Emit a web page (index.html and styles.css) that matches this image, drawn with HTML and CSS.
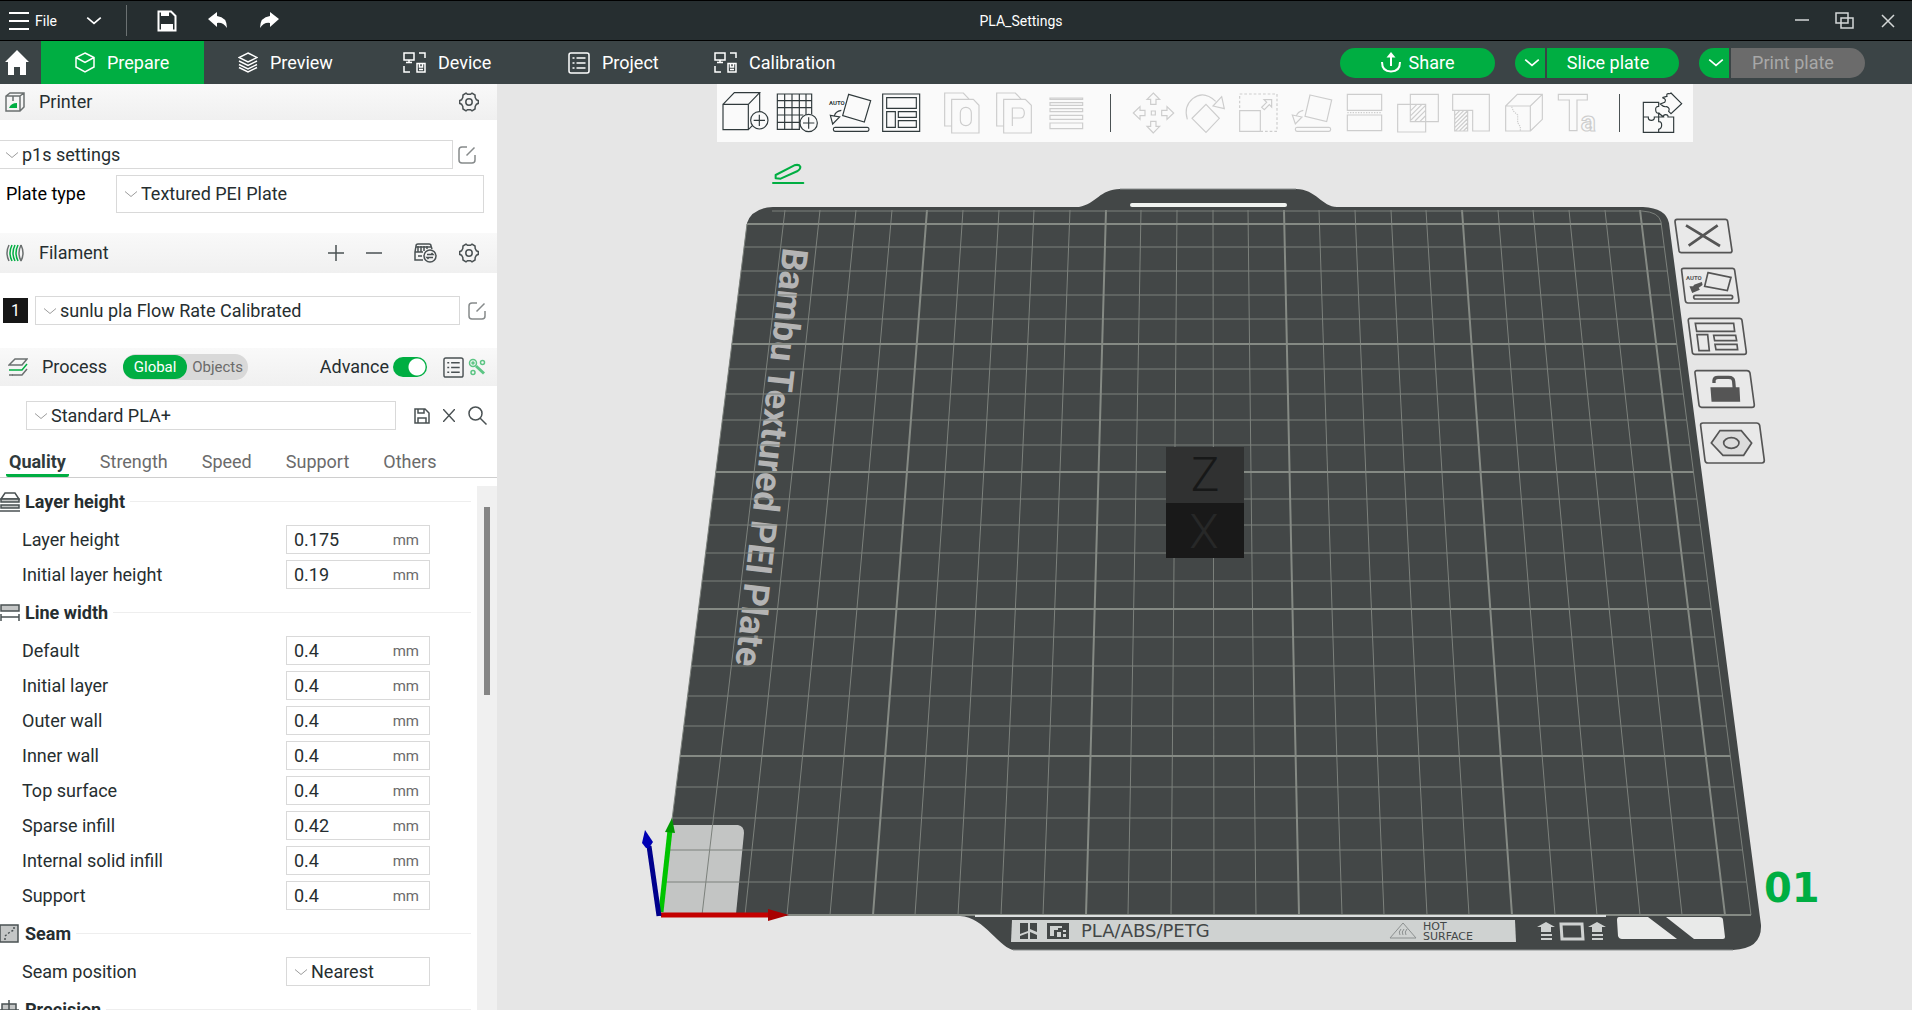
FILE: index.html
```html
<!DOCTYPE html>
<html lang="en">
<head>
    <meta charset="UTF-8">
    <meta name="viewport" content="width=device-width, initial-scale=1.0">
    <title>PLA_Settings</title>
    <link rel="stylesheet" href="styles.css">
</head>
<body>
    <!-- shared icons -->
    <svg class="defs" width="0" height="0" aria-hidden="true">
        <symbol id="chevron" viewBox="0 0 14 8"><path d="M1 1.5L7 6.5L13 1.5"/></symbol>
        <symbol id="gear" viewBox="0 0 20 20"><path d="M7 1.2L8.5 2.3H11.5L13 1.2L16 3L16.2 5.5L17.5 7.8L19.3 8.6V11.4L17.5 12.2L16.2 14.5L16 17L13 18.8L11.5 17.7H8.5L7 18.8L4 17L3.8 14.5L2.5 12.2L.7 11.4V8.6L2.5 7.8L3.8 5.5L4 3Z"/><circle cx="10" cy="10" r="3.2"/></symbol>
        <symbol id="edit" viewBox="0 0 18 18"><path d="M9 1H4Q1 1 1 4V14Q1 17 4 17H14Q17 17 17 14V9M8.5 9.5L16.5 1.5"/></symbol>
        <symbol id="list" viewBox="0 0 22 22"><rect x="1" y="1" width="20" height="20" rx="2"/><path d="M4.500 6H6.500M8.500 6H17.500M4.500 11H6.500M8.500 11H17.500M4.500 16H6.500M8.500 16H17.500"/></symbol>
        <symbol id="device" viewBox="0 0 23 21"><path d="M1 1H11V8H1ZM6 8V10.500M3 10.500H9M16 1H22V6M1 14V20H7M14 11.500H22V20H14ZM16.500 11.500V15H19.500V11.500M16 17.500H20"/></symbol>
    </svg>

    <header class="titlebar">
        <button class="file-btn">
            <svg width="20" height="18" viewBox="0 0 20 18"><path d="M0 1H20M0 9H20M0 17H20"/></svg>
            <span>File</span>
        </button>
        <button class="bar-btn chev-btn" aria-label="More"><svg width="16" height="9"><use href="#chevron"/></svg></button>
        <span class="bar-sep"></span>
        <button class="bar-btn save-btn" aria-label="Save">
            <svg width="20" height="22" viewBox="0 0 20 22"><path d="M1.500 1.500H14L18.500 6V20.500H1.500Z"/><path class="solid" d="M4 1H12V6H4ZM4 14H16V20H4Z"/></svg>
        </button>
        <button class="bar-btn" aria-label="Undo">
            <svg width="20" height="17" viewBox="0 0 20 17"><path class="solid" d="M0 7L9 0V4Q19 5 19 16Q15 10 9 11V15Z"/></svg>
        </button>
        <button class="bar-btn" aria-label="Redo">
            <svg width="20" height="17" viewBox="0 0 20 17"><path class="solid" d="M20 7L11 0V4Q1 5 1 16Q5 10 11 11V15Z"/></svg>
        </button>
        <h1 class="doc-title">PLA_Settings</h1>
        <div class="window-btns">
            <button class="bar-btn" aria-label="Minimize"><svg width="14" height="18" viewBox="0 0 14 18"><path d="M0 8H14"/></svg></button>
            <button class="bar-btn" aria-label="Restore"><svg width="20" height="17" viewBox="0 0 20 17"><path d="M1 1H13V11H1ZM6 6H18V16H6Z"/></svg></button>
            <button class="bar-btn" aria-label="Close"><svg width="14" height="14" viewBox="0 0 14 14"><path d="M1 1L13 13M13 1L1 13"/></svg></button>
        </div>
    </header>

    <nav class="navbar">
        <a class="home" href="#" aria-label="Home">
            <svg width="24" height="25" viewBox="0 0 24 25"><path d="M12 0L24 12H21V25H15V17H9V25H3V12H0Z"/></svg>
        </a>
        <a class="nav-tab active" href="#">
            <svg width="20" height="21" viewBox="0 0 20 21"><path d="M10 1L19 5.500V15L10 20L1 15V5.500ZM1 5.500L10 10.500L19 5.500"/></svg>
            Prepare
        </a>
        <a class="nav-tab" href="#">
            <svg width="20" height="21" viewBox="0 0 20 21"><path d="M10 1L19 5.500L10 10L1 5.500ZM1 9L10 13.500L19 9M1 12.500L10 17L19 12.500M1 15.500L10 20L19 15.500"/></svg>
            Preview
        </a>
        <a class="nav-tab" href="#"><svg width="23" height="21"><use href="#device"/></svg>Device</a>
        <a class="nav-tab compact" href="#"><svg width="22" height="22"><use href="#list"/></svg>Project</a>
        <a class="nav-tab" href="#"><svg width="23" height="21"><use href="#device"/></svg>Calibration</a>

        <div class="nav-actions">
            <button class="pill share">
                <svg width="20" height="21" viewBox="0 0 20 21"><path d="M1 10Q1 19.500 10 19.500Q19 19.500 19 10M10 14V3"/><path class="solid" d="M5.500 5.500L10 0L14.500 5.500Z"/></svg>
                Share
            </button>
            <div class="split">
                <button class="pill drop" aria-label="Slice options"><svg width="16" height="9"><use href="#chevron"/></svg></button>
                <button class="pill main">Slice plate</button>
            </div>
            <div class="split">
                <button class="pill drop" aria-label="Print options"><svg width="16" height="9"><use href="#chevron"/></svg></button>
                <button class="pill main off" disabled>Print plate</button>
            </div>
        </div>
    </nav>

    <div class="workspace">
        <aside class="sidebar">
            <!-- Printer -->
            <div class="panel-head">
                <svg class="ico" width="20" height="20" viewBox="0 0 20 20"><path d="M1 4L5 1H19V15L15 19H1ZM1 4H15V19M15 4L19 1M8 4V9"/><path class="leaf" d="M4 16Q6 11 12 11V16Z"/></svg>
                <h2>Printer</h2>
                <button class="icon-btn push" aria-label="Printer settings"><svg width="20" height="20"><use href="#gear"/></svg></button>
            </div>
            <div class="printer-body">
                <div class="preset-row">
                    <div class="select grow flush">
                        <svg width="14" height="8"><use href="#chevron"/></svg>
                        <select aria-label="Printer preset"><option>p1s settings</option></select>
                    </div>
                    <button class="icon-btn pale" aria-label="Edit printer"><svg width="18" height="18"><use href="#edit"/></svg></button>
                </div>
                <div class="plate-row">
                    <label for="plate">Plate type</label>
                    <div class="select grow tall">
                        <svg width="14" height="8"><use href="#chevron"/></svg>
                        <select id="plate"><option>Textured PEI Plate</option></select>
                    </div>
                </div>
            </div>

            <!-- Filament -->
            <div class="panel-head filament-head">
                <svg class="ico" width="20" height="20" viewBox="0 0 20 20"><path d="M4 2Q0 10 4 18M16 2Q20 10 16 18M16 2Q12 10 16 18"/><path class="green" d="M7 2Q3 10 7 18M10 2Q6 10 10 18M13 2Q9 10 13 18"/></svg>
                <h2>Filament</h2>
                <div class="head-tools push">
                    <button class="icon-btn" aria-label="Add filament"><svg width="16" height="16" viewBox="0 0 16 16"><path d="M8 0V16M0 8H16"/></svg></button>
                    <button class="icon-btn" aria-label="Remove filament"><svg width="16" height="16" viewBox="0 0 16 16"><path d="M0 8H16"/></svg></button>
                    <button class="icon-btn ams" aria-label="Sync AMS"><svg width="23" height="20" viewBox="0 0 23 20"><path d="M9 17H1V9L2 3Q2 1 4 1H15Q17 1 17 3L18 6M1 9H9M4 3V9M7 3V9M10 3V8M13 3V6M2 4H17M4 13H8"/><circle cx="16" cy="13" r="6"/><path d="M13 11.500H19L17.500 10M19 14.500H13L14.500 16"/></svg></button>
                    <button class="icon-btn" aria-label="Filament settings"><svg width="20" height="20"><use href="#gear"/></svg></button>
                </div>
            </div>
            <div class="filament-body">
                <span class="slot">1</span>
                <div class="select grow">
                    <svg width="14" height="8"><use href="#chevron"/></svg>
                    <select aria-label="Filament preset"><option>sunlu pla Flow Rate Calibrated</option></select>
                </div>
                <button class="icon-btn pale" aria-label="Edit filament"><svg width="18" height="18"><use href="#edit"/></svg></button>
            </div>

            <!-- Process -->
            <div class="panel-head process-head">
                <svg class="ico" width="20" height="20" viewBox="0 0 20 20"><path d="M7 2H19L14 8H1ZM4 18H14L19 12"/><path class="green" d="M1 13H14L19 7"/><path d="M1 18H5"/></svg>
                <h2>Process</h2>
                <div class="scope">
                    <button class="on">Global</button>
                    <button>Objects</button>
                </div>
                <label class="advance push" for="advance">Advance</label>
                <input type="checkbox" class="toggle" id="advance" checked>
                <button class="icon-btn params-btn" aria-label="Parameter list"><svg width="21" height="21"><use href="#list"/></svg></button>
                <button class="icon-btn compare" aria-label="Compare presets"><svg width="18" height="18" viewBox="0 0 18 18"><circle cx="5" cy="5" r="3.500"/><circle cx="5" cy="5" r="1"/><circle cx="14.500" cy="4.500" r="2"/><circle cx="5" cy="14.500" r="2"/><path d="M8 8L16 15.500" stroke-width="3"/></svg></button>
            </div>
            <div class="process-body">
                <div class="select grow">
                    <svg width="14" height="8"><use href="#chevron"/></svg>
                    <select aria-label="Process preset"><option>Standard PLA+</option></select>
                </div>
                <div class="process-tools">
                    <button class="icon-btn" aria-label="Save preset"><svg width="16" height="16" viewBox="0 0 16 16"><path d="M1 1H11L15 5V15H1ZM4 1V5H10V1M4 15V10H12V15"/></svg></button>
                    <button class="icon-btn" aria-label="Delete preset"><svg width="12" height="13" viewBox="0 0 12 13"><path d="M0 0L12 13M12 0L0 13"/></svg></button>
                    <button class="icon-btn" aria-label="Search"><svg width="19" height="19" viewBox="0 0 19 19"><circle cx="7.500" cy="7.500" r="6.500"/><path d="M12 12L18.500 18.500"/></svg></button>
                </div>
            </div>
            <div class="tabs">
                <button class="tab active">Quality</button>
                <button class="tab">Strength</button>
                <button class="tab">Speed</button>
                <button class="tab">Support</button>
                <button class="tab">Others</button>
            </div>

            <div class="params">
                <div class="param-list">
                    <h3>
                        <svg width="20" height="20" viewBox="0 0 20 20"><path d="M1 7L5 1H15L19 7Z"/><path class="fill" d="M1 7H19V10H1ZM1 13H19V16H1Z"/><path d="M0 19H20"/></svg>
                        Layer height
                    </h3>
                    <div class="param"><label for="p1">Layer height</label><div class="field"><input type="text" id="p1" value="0.175"><span>mm</span></div></div>
                    <div class="param"><label for="p2">Initial layer height</label><div class="field"><input type="text" id="p2" value="0.19"><span>mm</span></div></div>

                    <h3>
                        <svg width="20" height="20" viewBox="0 0 20 20"><path class="fill" d="M1 2H19V8H1Z"/><path d="M1 11V18M19 11V18M1 14H19"/></svg>
                        Line width
                    </h3>
                    <div class="param"><label for="p3">Default</label><div class="field"><input type="text" id="p3" value="0.4"><span>mm</span></div></div>
                    <div class="param"><label for="p4">Initial layer</label><div class="field"><input type="text" id="p4" value="0.4"><span>mm</span></div></div>
                    <div class="param"><label for="p5">Outer wall</label><div class="field"><input type="text" id="p5" value="0.4"><span>mm</span></div></div>
                    <div class="param"><label for="p6">Inner wall</label><div class="field"><input type="text" id="p6" value="0.4"><span>mm</span></div></div>
                    <div class="param"><label for="p7">Top surface</label><div class="field"><input type="text" id="p7" value="0.4"><span>mm</span></div></div>
                    <div class="param"><label for="p8">Sparse infill</label><div class="field"><input type="text" id="p8" value="0.42"><span>mm</span></div></div>
                    <div class="param"><label for="p9">Internal solid infill</label><div class="field"><input type="text" id="p9" value="0.4"><span>mm</span></div></div>
                    <div class="param"><label for="p10">Support</label><div class="field"><input type="text" id="p10" value="0.4"><span>mm</span></div></div>

                    <h3>
                        <svg width="20" height="20" viewBox="0 0 20 20"><path class="fill" d="M0 1H18V18H0Z"/><path d="M5 16V12L10 8L14 6V2" stroke-dasharray="2 2"/></svg>
                        Seam
                    </h3>
                    <div class="param">
                        <label for="seam">Seam position</label>
                        <div class="select small">
                            <svg width="14" height="8"><use href="#chevron"/></svg>
                            <select id="seam"><option>Nearest</option></select>
                        </div>
                    </div>

                    <h3>
                        <svg width="20" height="20" viewBox="0 0 20 20"><path class="fill" d="M2 4H16V16H2Z"/><path d="M9 0V20M0 10H19"/></svg>
                        Precision
                    </h3>
                </div>
                <div class="scroll-track"><div class="scroll-thumb"></div></div>
            </div>
        </aside>

        <main class="viewport">
            <div class="toolbar">
                <div class="tool-group">
                    <button class="tool" aria-label="Add"><svg viewBox="57 12 159 174"><path d="M69 73H145V149H69ZM69 73L103 38H179L145 73M179 38V95M145 149L157 137"/><circle cx="178" cy="121" r="26"/><path d="M178 104V138M161 121H195"/></svg></button>
                    <button class="tool" aria-label="Add plate"><svg viewBox="216 12 159 174"><path d="M300 148H232V42H335V103M232 62H335M232 83H335M232 105H310M232 127H300M254 42V148M276 42V148M298 42V148M318 42V105"/><circle cx="326" cy="129" r="26"/><path d="M326 112V146M309 129H343"/></svg></button>
                    <button class="tool" aria-label="Auto orient"><svg viewBox="375 12 159 174"><path d="M446 43L512 62L493 126L428 107ZM405 142H502Q507 142 507 148Q507 154 502 154H405Q400 154 400 148Q400 142 405 142ZM424 91Q405 94 403 109M391 106L419 111L398 132Z"/><text x="387" y="76" font-size="18">AUTO</text></svg></button>
                    <button class="tool" aria-label="Arrange"><svg viewBox="534 12 159 174"><path d="M548 42H659V154H548ZM560 53H649V85H560ZM560 95H586V142H560ZM595 95H649V112H595ZM595 122H649V142H595Z"/></svg></button>
                </div>
                <div class="tool-group">
                    <button class="tool" disabled aria-label="Split to objects"><svg viewBox="708 12 159 174"><path d="M755 138H734V39H790L808 58M755 58H820L837 76V159H755Z"/><rect x="781" y="82" width="33" height="55" rx="16"/></svg></button>
                    <button class="tool" disabled aria-label="Split to parts"><svg viewBox="867 12 159 174"><path d="M911 138H890V39H946L964 58M911 58H976L994 76V159H911ZM937 138V84H960Q973 84 973 99Q973 114 960 114H937"/></svg></button>
                    <button class="tool" disabled aria-label="Variable layer height"><svg viewBox="1026 12 159 174"><path d="M1050 54H1148V58H1050ZM1050 68H1148V76H1050ZM1050 86H1148V95H1050ZM1050 106H1148V118H1050ZM1050 129H1148V146H1050Z"/></svg></button>
                </div>
                <span class="tool-sep"></span>
                <div class="tool-group flush-group">
                    <button class="tool" disabled aria-label="Move"><svg viewBox="1281 12 159 174"><path d="M1360 39L1379 58H1368V73H1352V58H1341ZM1360 159L1341 139H1352V124H1368V139H1379ZM1300 99L1320 80V91H1335V107H1320V118ZM1421 99L1401 118V107H1385V91H1401V80ZM1354 93H1366V105H1354Z"/></svg></button>
                    <button class="tool" disabled aria-label="Rotate"><svg viewBox="-30 12 159 174"><path d="M48 73L88 115L48 157L6 115ZM-8 118Q-20 80 8 56Q41 30 77 64M95 50L103 86L69 78Z"/></svg></button>
                    <button class="tool" disabled aria-label="Scale"><svg viewBox="129 12 159 174"><path d="M149 84V42H261V154H212" stroke-dasharray="8 6"/><path d="M149 92H211V154H149ZM245 59V81L238 74L223 89L215 82L230 67L222 59Z"/></svg></button>
                    <button class="tool" disabled aria-label="Lay on face"><svg viewBox="288 12 159 174"><path d="M360 45L425 60L410 125L345 109ZM321 142H417Q422 142 422 148Q422 154 417 154H321Q316 154 316 148Q316 142 321 142ZM340 91Q322 95 319 109M307 105L336 111L316 132Z"/></svg></button>
                    <button class="tool" disabled aria-label="Cut"><svg viewBox="447 12 159 174"><path d="M472 43H575V91H472ZM472 105H575V152H472Z"/><path d="M472 98H575" stroke-dasharray="4 4"/></svg></button>
                    <button class="tool" disabled aria-label="Boolean"><svg viewBox="606 12 159 174"><path d="M661 43H745V125H661ZM623 73H707V156H623ZM662 92L680 74M662 107L695 74M663 120L706 77M675 123L706 92M690 124L706 108"/></svg></button>
                    <button class="tool" disabled aria-label="Supports"><svg viewBox="765 12 159 174"><path d="M788 43H898V153H848V91H788ZM794 91H833V153H794ZM795 106L809 92M795 118L821 92M795 130L832 93M795 142L832 105M797 152L832 117M809 152L832 129M821 152L832 141"/></svg></button>
                    <button class="tool" disabled aria-label="Seam painting"><svg viewBox="924 12 159 174"><path d="M947 78H1021V153H947ZM947 78L982 43H1057V118L1021 153M1021 78L1057 43"/><path d="M965 80L970 93L983 105L983 128L991 140V152" stroke-dasharray="4 3"/></svg></button>
                    <button class="tool" disabled aria-label="Text shape"><svg viewBox="1083 12 159 174"><path d="M1105 43H1192V60H1161V152H1138V60H1105Z"/><text x="1172" y="153" font-size="84">a</text></svg></button>
                </div>
                <span class="tool-sep"></span>
                <div class="tool-group flush-group">
                    <button class="tool" aria-label="Assembly view"><svg viewBox="1341 12 159 174"><path d="M1363 67H1409V79Q1399 79 1400 90Q1401 101 1409 99V111H1396Q1397 121 1387 121Q1377 121 1378 111H1363ZM1363 111V157H1409V148Q1418 146 1418 135Q1418 124 1409 125V111H1424Q1422 104 1430 104Q1438 104 1437 111H1454V157H1409M1420 53L1434 49Q1431 40 1440 41Q1444 42 1446 39L1478 71L1446 101L1439 94Q1444 84 1433 80Q1424 82 1414 72L1427 67Q1434 57 1420 53M1409 99Q1412 102 1424 111"/></svg></button>
                </div>
            </div>

            <svg class="scene" viewBox="497 84 1415 926" preserveAspectRatio="xMidYMin meet">
                <defs>
                    <clipPath id="bed"><path d="M772 210H1642Q1659 211 1661 222L1751 915H660L747 224Q752 211 772 210Z"/></clipPath>
                </defs>

                <!-- build plate -->
                <path class="plate" d="M773 207H1079C1096 204 1100 189 1120 189H1296C1316 189 1322 207 1337 207H1643Q1666 208 1669 223L1761 925Q1762 949 1733 950H1015C1000 950 985 917 960 916H660L747 223Q752 208 773 207Z"/>
                <path class="edge" d="M1120 189H1296M1013 950H1733"/>
                <rect class="slot-cut" x="1130" y="203" width="157" height="4" rx="2"/>
                <path class="corner" d="M671 825H738Q744 826 744 833L736 914H660Z"/>
                <text class="plate-name" transform="translate(783 247) rotate(96.500)">Bambu Textured PEI Plate</text>

                <g clip-path="url(#bed)">
                    <path class="grid" d="M600 247H1800M600 271H1800M600 295H1800M600 319H1800M600 369H1800M600 394H1800M600 420H1800M600 445H1800M600 499H1800M600 525H1800M600 553H1800M600 581H1800M600 637H1800M600 666H1800M600 696H1800M600 726H1800M600 787H1800M600 818H1800M600 850H1800M600 882H1800"/>
                    <path class="grid" d="M785 210L702 915M820 210L745 915M856 210L787 915M892 210L830 915M963 210L915 915M999 210L958 915M1034 210L1001 915M1070 210L1043 915M1141 210L1128 915M1177 210L1171 915M1213 210L1214 915M1248 210L1256 915M1319 210L1342 915M1355 210L1384 915M1391 210L1427 915M1426 210L1469 915M1498 210L1555 915M1533 210L1597 915M1569 210L1640 915M1605 210L1682 915"/>
                    <path class="grid bold" d="M600 224H1800M600 344H1800M600 472H1800M600 609H1800M600 756H1800M927 210L873 915M1106 210L1086 915M1284 210L1299 915M1462 210L1512 915M1640 210L1725 915"/>
                </g>
                <path class="grid" d="M772 211H1642Q1659 212 1661 222L1751 915M747 224L660 915"/>
                <path class="grid bold" d="M787 915H1751"/>
                <path class="lip-line" d="M975 916H1606"/>

                <!-- plate label strip -->
                <path class="strip" d="M1012 920H1515L1516 942H1011Z"/>
                <path class="ink" d="M1020 923H1028V931L1020 934ZM1020 936L1028 933V939H1020ZM1030 923H1037V932L1030 929ZM1030 932L1037 935V939H1030Z"/>
                <path class="ink" fill-rule="evenodd" d="M1047 923H1069V939H1047ZM1050 926V936H1054V930H1058V928H1062V926ZM1057 932V937H1061V932ZM1063 934V937H1066V934ZM1063 930V932H1066V930Z"/>
                <text class="strip-text" x="1081" y="937">PLA/ABS/PETG</text>
                <path class="warn" d="M1403 923L1416 938H1390ZM1400 935Q1398 932 1401 929M1403 935Q1401 932 1404 929M1406 935Q1404 932 1407 929"/>
                <text class="hot-text" x="1423" y="930">HOT</text>
                <text class="hot-text" x="1423" y="940">SURFACE</text>
                <path class="strip" d="M1546 922L1555 927H1551V932H1541V927H1537ZM1541 934H1552V936H1541ZM1541 938H1552V940H1541ZM1597 922L1606 927H1602V932H1592V927H1588ZM1592 934H1603V936H1592ZM1592 938H1603V940H1592Z"/>
                <path class="frame" d="M1561 924H1582L1583 939H1562Z"/>
                <path class="hole" d="M1619 917H1648L1677 939H1622Q1619 939 1618 936L1617 920Q1617 917 1619 917ZM1666 917H1719Q1723 917 1723 920L1725 937Q1725 939 1723 939H1694Z"/>

                <!-- calibration cube -->
                <rect x="1166" y="447" width="78" height="56" fill="#303131"/>
                <rect x="1166" y="503" width="78" height="55" fill="#191919"/>
                <text class="cube-text" x="1205" y="491" fill="#171818">Z</text>
                <text class="cube-text" x="1204" y="548" fill="#272828">X</text>

                <!-- axes -->
                <path stroke="#c40000" stroke-width="5" d="M661 915H769"/>
                <path fill="#a80000" d="M768 909L789 915L768 921Z"/>
                <path stroke="#00c400" stroke-width="5" d="M661 912L670 830"/>
                <path fill="#009a00" d="M665 832L672 818L675 833Z"/>
                <path stroke="#00008c" stroke-width="5" d="M659 916L649 846"/>
                <path fill="#0000b4" d="M642 843L645 830L653 842L649 848H646Z"/>

                <!-- plate name edit -->
                <g class="pencil" transform="translate(700 80) scale(.3333)">
                    <path d="M227 295V285L283 256Q297 252 301 260Q302 267 293 273L242 296Z"/>
                    <path d="M219 309H310"/>
                </g>

                <!-- plate controls -->
                <g class="plate-icons" transform="translate(1600 190) scale(.3333)">
                    <path class="tile" d="M231 88H376Q382 88 383 94L396 182Q396 188 390 188H244Q238 188 237 182L225 95Q225 88 231 88ZM251 235H397Q403 235 404 241L417 332Q417 339 411 339H264Q257 339 256 332L245 242Q244 235 251 235ZM271 385H418Q425 385 426 391L439 486Q439 493 433 493H285Q278 493 277 487L265 393Q264 385 271 385ZM291 542H441Q448 542 450 549L463 645Q463 652 456 652H305Q298 652 297 645L285 549Q284 542 291 542ZM309 699H470Q477 699 479 706L493 811Q493 819 486 819H324Q316 819 315 811L302 707Q301 699 309 699Z"/>
                    <path class="cross" d="M258 106L360 168M353 106L266 167"/>
                    <path d="M324 248L393 262L382 302L314 289ZM286 316H393Q398 316 398 321Q398 327 393 327H286Q281 327 281 321Q281 316 286 316Z"/>
                    <path class="lock" d="M304 279L284 286L281 291H272L278 306L296 298L293 293L305 284Z"/>
                    <text x="258" y="270">AUTO</text>
                    <path d="M286 400H401L404 424H290ZM291 434H323L328 482H297ZM341 436H407L410 452H344ZM345 463H411L413 479H348Z"/>
                    <path class="lock" d="M334 594H416L418 633H337Z"/>
                    <path class="shackle" d="M342 579V571Q343 562 354 562H386Q400 562 401 574L403 596"/>
                    <path class="nut" d="M360 722H424L455 759L431 796H369L334 759Z"/>
                    <ellipse cx="394" cy="759" rx="23" ry="16"/>
                </g>
                <text class="plate-no" x="1764" y="902">01</text>
            </svg>
        </main>
    </div>
</body>
</html>
```
FILE: styles.css
```css
* {
    box-sizing: border-box;
}

body {
    margin: 0;
    height: 100vh;
    display: flex;
    flex-direction: column;
    overflow: hidden;
    font-family: Roboto, "Liberation Sans", sans-serif;
    font-size: 18px;
    line-height: 22px;
    color: #262e30;
    background-color: #e6e6e6;
}

button,
input,
select {
    font: inherit;
    color: inherit;
}

button {
    border: none;
    padding: 0;
    background: none;
    cursor: pointer;
}

svg {
    display: block;
    fill: none;
    stroke: currentColor;
    flex-shrink: 0;
}

.defs {
    position: absolute;
}

h1, h2, h3 {
    margin: 0;
    font-size: inherit;
    font-weight: normal;
}

/* title bar */
.titlebar {
    display: flex;
    align-items: center;
    position: relative;
    height: 41px;
    flex-shrink: 0;
    padding: 0 17px 0 9px;
    background-color: #262e30;
    border-top: 1px solid #000;
    border-bottom: 1px solid #000;
    color: #fff;
    font-size: 14px;
}

.file-btn {
    display: flex;
    align-items: center;
    gap: 6px;
}

.file-btn svg {
    stroke-width: 2;
}

.bar-btn {
    margin-right: 31px;
}

.bar-btn svg {
    stroke-width: 1.5;
}

.chev-btn {
    margin: 0 24px 0 29px;
}

.bar-sep {
    width: 1px;
    height: 31px;
    background-color: #6b7172;
    margin-right: 30px;
}

.save-btn svg {
    stroke-width: 2;
}

.solid {
    fill: currentColor;
    stroke: none;
}

.doc-title {
    position: absolute;
    left: 0;
    right: 0;
    text-align: center;
    padding-left: 130px;
    pointer-events: none;
}

.window-btns {
    display: flex;
    align-items: center;
    gap: 26px;
    margin-left: auto;
}

.window-btns .bar-btn {
    margin: 0;
    color: #d4d7d7;
}

/* navigation */
.navbar {
    display: flex;
    align-items: center;
    height: 43px;
    flex-shrink: 0;
    background-color: #3b4446;
    color: #fff;
}

.home {
    width: 41px;
    padding-left: 5px;
    color: #fff;
}

.home svg {
    fill: #fff;
    stroke: none;
}

.nav-tab {
    display: flex;
    align-items: center;
    gap: 12px;
    height: 100%;
    min-width: 165px;
    padding: 0 34px;
    color: #fff;
    text-decoration: none;
}

.nav-tab.compact {
    min-width: 146px;
    padding-right: 20px;
}

.nav-tab svg {
    stroke-width: 1.5;
}

.nav-tab.active {
    min-width: 163px;
    padding-right: 30px;
    background-color: #00ae42;
}

.nav-actions {
    display: flex;
    gap: 20px;
    margin-left: auto;
    margin-right: 47px;
}

.pill {
    display: flex;
    align-items: center;
    justify-content: center;
    height: 30px;
    background-color: #00ae42;
    color: #fff;
}

.pill svg {
    stroke-width: 1.5;
}

.share {
    gap: 8px;
    width: 155px;
    border-radius: 15px;
}

.share svg {
    stroke-width: 2;
}

.split {
    display: flex;
    gap: 2px;
}

.drop {
    width: 30px;
    padding-left: 4px;
    border-radius: 15px 0 0 15px;
}

.main {
    width: 132px;
    padding-right: 10px;
    border-radius: 0 15px 15px 0;
}

.main.off {
    width: 134px;
    background-color: #6b6b6b;
    color: #a8a8a8;
}

/* sidebar */
.workspace {
    display: flex;
    flex: 1;
    min-height: 0;
}

.sidebar {
    display: flex;
    flex-direction: column;
    width: 497px;
    flex-shrink: 0;
    background-color: #fff;
}

.panel-head {
    display: flex;
    align-items: center;
    height: 36px;
    flex-shrink: 0;
    padding: 0 18px 0 5px;
    background: linear-gradient(#f9f9f9, #f0f0f0);
}

.filament-head {
    height: 40px;
}

.process-head {
    height: 38px;
    padding: 0 11px 0 8px;
}

.ico {
    margin-right: 14px;
    color: #6b7070;
    stroke-width: 1.5;
}

.green {
    stroke: #00ae42;
}

.leaf {
    fill: #00ae42;
    stroke: none;
}

.push {
    margin-left: auto;
}

.icon-btn {
    color: #4a5153;
}

.icon-btn svg {
    stroke-width: 1.5;
}

.pale {
    color: #868a8b;
}

.head-tools {
    display: flex;
    align-items: center;
    gap: 22px;
}

.head-tools .ams {
    margin-left: 10px;
}

.select {
    display: flex;
    align-items: center;
    position: relative;
    height: 29px;
    border: 1px solid #d9d9d9;
    background-color: #fff;
}

.select svg {
    position: absolute;
    left: 7px;
    color: #9c9c9c;
    pointer-events: none;
}

.select select {
    appearance: none;
    width: 100%;
    height: 100%;
    border: none;
    padding: 0 0 0 24px;
    background: none;
    outline: none;
}

.select.flush {
    border-left: none;
}

.select.flush svg {
    left: 5px;
}

.select.flush select {
    padding-left: 22px;
}

.grow {
    flex: 1;
}

.tall {
    height: 38px;
}

.small {
    width: 144px;
}

.printer-body {
    padding: 20px 13px 20px 0;
}

.preset-row {
    display: flex;
    align-items: center;
    gap: 5px;
    padding-right: 8px;
    margin-bottom: 6px;
}

.plate-row {
    display: flex;
    align-items: center;
    color: #000;
}

.plate-row label {
    width: 116px;
    padding-left: 6px;
}

.plate-row .select {
    color: #262e30;
}

.filament-body {
    display: flex;
    align-items: center;
    gap: 7px;
    padding: 23px 11px 23px 3px;
}

.filament-body .icon-btn {
    margin-left: 1px;
}

.slot {
    width: 25px;
    height: 25px;
    line-height: 25px;
    font-size: 16px;
    text-align: center;
    background-color: #161616;
    color: #fff;
}

.scope {
    display: flex;
    margin-left: 16px;
    height: 26px;
    padding: 1px 0;
    border-radius: 13px;
    background-color: #d9d9d9;
    font-size: 15px;
    color: #6b6b6b;
}

.scope button {
    width: 61px;
}

.scope .on {
    width: 64px;
    border-radius: 12px;
    background-color: #00ae42;
    color: #fff;
}

.toggle {
    appearance: none;
    width: 34px;
    height: 20px;
    margin: 0 16px 0 4px;
    border-radius: 10px;
    background: radial-gradient(circle at 24px 10px, #fff 8px, #00ae42 9px);
    cursor: pointer;
}

.params-btn {
    margin-right: 4px;
}

.compare {
    color: #5cc584;
}

.process-body {
    display: flex;
    align-items: center;
    padding: 15px 10px 0 26px;
}

.process-tools {
    display: flex;
    align-items: center;
    gap: 13px;
    margin-left: 18px;
}

.tabs {
    display: flex;
    gap: 28px;
    height: 48px;
    flex-shrink: 0;
    padding: 13px 0 0 6px;
    border-bottom: 1px solid #cecece;
    color: #6b6b6b;
}

.tab {
    height: 34px;
    padding: 6px 3px 0;
    border-bottom: 3px solid transparent;
}

.tab.active {
    border-color: #00ae42;
    border-radius: 2px;
    font-weight: bold;
    color: #303a3c;
}

.params {
    display: flex;
    flex: 1;
    min-height: 0;
}

.param-list {
    flex: 1;
    overflow: hidden;
    padding-right: 6px;
}

.param-list h3 {
    display: flex;
    align-items: center;
    height: 47px;
    gap: 5px;
    font-weight: bold;
}

.param-list h3::after {
    content: "";
    flex: 1;
    height: 1px;
    background-color: #eee;
}

.param-list h3 svg {
    stroke-width: 1.5;
    color: #4a5153;
}

.fill {
    fill: #c4c6c6;
}

.param {
    display: flex;
    align-items: center;
    justify-content: space-between;
    margin-bottom: 6px;
    padding: 0 41px 0 22px;
}

/* last row of a group sits flush on the next heading */
.param:has(+ h3) {
    margin-bottom: 0;
}

.field {
    display: flex;
    align-items: center;
    width: 144px;
    height: 29px;
    padding: 0 10px 0 7px;
    border: 1px solid #d9d9d9;
}

.field input {
    flex: 1;
    min-width: 0;
    border: none;
    padding: 0;
    background: none;
    outline: none;
}

.field span {
    font-size: 15px;
    color: #6b6b6b;
}

.scroll-track {
    width: 20px;
    margin-top: 8px;
    padding: 21px 7px 0;
    background-color: #f0f0f0;
}

.scroll-thumb {
    height: 188px;
    background-color: #858585;
}

/* 3D view */
.viewport {
    position: relative;
    flex: 1;
    min-width: 0;
    overflow: hidden;
    background-color: #e6e6e6;
}

.scene {
    width: 100%;
    height: 100%;
    stroke: none;
}

.toolbar {
    display: flex;
    align-items: center;
    position: absolute;
    top: 0;
    left: 50%;
    transform: translateX(-50%);
    height: 58px;
    padding: 0 4px 0 2px;
    background-color: #fafafa;
}

.tool-group {
    display: flex;
}

.tool-group + .tool-group {
    margin-left: 5px;
}

.tool {
    width: 53px;
    height: 58px;
    color: #303a3c;
}

.tool:disabled {
    color: #cdcdcd;
}

.tool svg {
    width: 53px;
    height: 58px;
    stroke-width: 3.5;
}

.tool text {
    font-weight: bold;
    fill: currentColor;
    stroke: none;
}

.tool:disabled text {
    fill: #fafafa;
    stroke: currentColor;
}

.tool-sep {
    width: 1px;
    height: 38px;
    margin: 0 16px 0 15px;
    background-color: #4a5153;
}

.plate {
    fill: #434747;
}

.edge {
    stroke: #8c9090;
}

.slot-cut {
    fill: #f0f3f0;
}

.corner {
    fill: #c3c5c4;
}

.grid {
    stroke: #7c817c;
    fill: none;
}

.grid.bold {
    stroke: #858a84;
    stroke-width: 2;
}

.lip-line {
    stroke: #dde0e0;
    stroke-width: 2;
}

.plate-name {
    font-size: 36px;
    font-weight: bold;
    fill: #b4b4b4;
}

.strip {
    fill: #cfd2d1;
}

.ink {
    fill: #434747;
}

.strip-text {
    font-family: "DejaVu Sans", sans-serif;
    font-size: 18px;
    fill: #434747;
}

.hot-text {
    font-family: "DejaVu Sans", sans-serif;
    font-size: 11px;
    fill: #434747;
}

.warn {
    stroke: #8c9090;
}

.frame {
    stroke: #cfd2d1;
    stroke-width: 3;
}

.hole {
    fill: #e9eae9;
}

.cube-text {
    font-size: 48px;
    font-weight: 300;
    text-anchor: middle;
}

.pencil {
    stroke: #00ae42;
    stroke-width: 6;
    stroke-linecap: round;
    stroke-linejoin: round;
}

.plate-icons {
    stroke: #555;
    stroke-width: 5;
}

.plate-icons .tile {
    fill: #e9e9e9;
    stroke-width: 5;
}

.plate-icons .cross {
    stroke-width: 8;
}

.plate-icons text {
    font-size: 18px;
    font-weight: bold;
    fill: #555;
    stroke: none;
}

.plate-icons .lock {
    fill: #555;
}

.plate-icons .shackle {
    stroke-width: 10;
}

.plate-icons .nut {
    fill: #dcdcdc;
}

.plate-no {
    font-family: "DejaVu Sans", sans-serif;
    font-size: 40px;
    font-weight: bold;
    fill: #00ae42;
}
```
